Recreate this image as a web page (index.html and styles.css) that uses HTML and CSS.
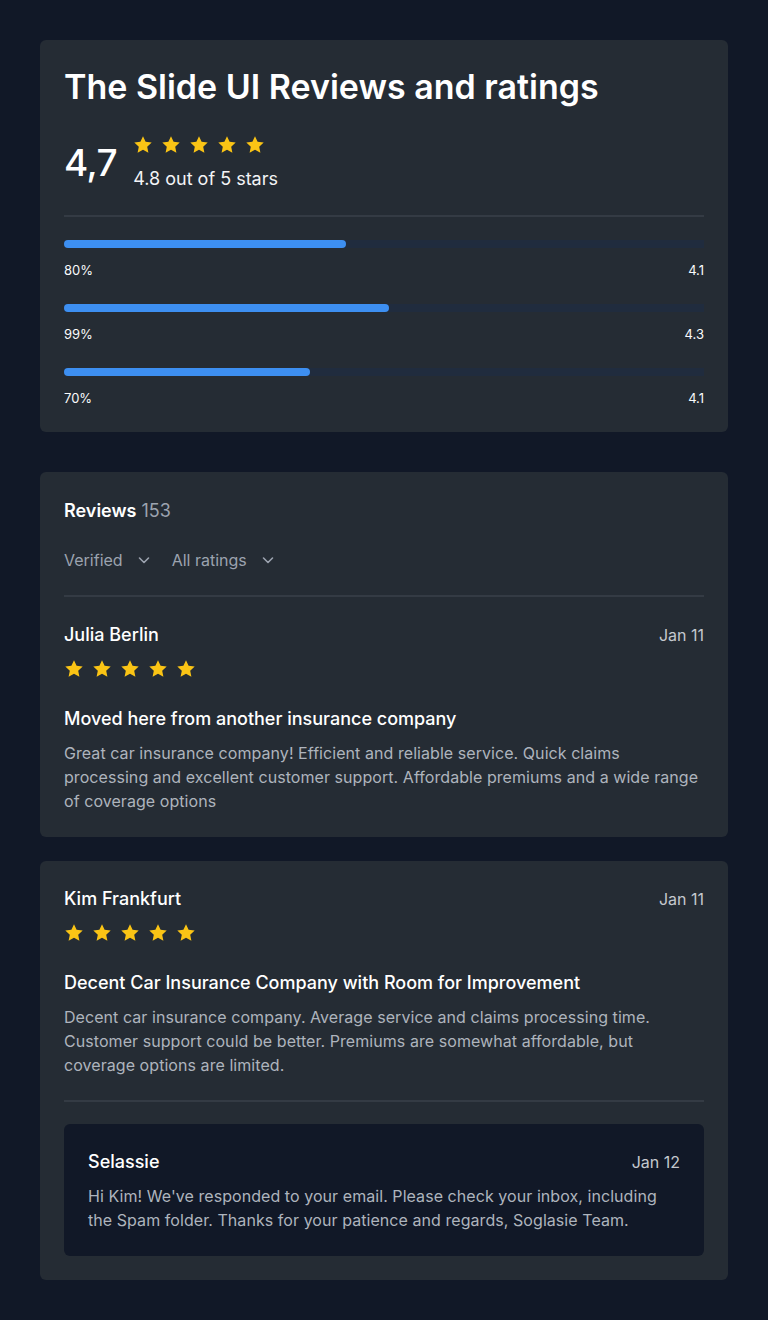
FILE: index.html
```html
<!DOCTYPE html>
<html lang="en">
<head>
<meta charset="utf-8">
<title>The Slide UI Reviews and ratings</title>
<link rel="stylesheet" href="styles.css">
</head>
<body>
<svg width="0" height="0" class="defs" aria-hidden="true">
  <defs>
    <symbol id="star" viewBox="0 0 20 20">
      <path d="M10 1.2l2.6 5.6 6.1.7-4.5 4.2 1.2 6.1L10 14.8l-5.4 3 1.2-6.1L1.3 7.5l6.1-.7z" fill="#fac415"/>
    </symbol>
    <symbol id="chev" viewBox="0 0 16 16">
      <path d="M3.5 6l4.5 4.5L12.5 6" fill="none" stroke="#9ca3af" stroke-width="1.6" stroke-linecap="round" stroke-linejoin="round"/>
    </symbol>
  </defs>
</svg>
<main class="page">
  <section class="card summary">
    <h1 class="title">The Slide UI Reviews and ratings</h1>
    <div class="score">
      <div class="big">4,7</div>
      <div class="score-info">
        <div class="stars">
          <svg class="star"><use href="#star"/></svg><svg class="star"><use href="#star"/></svg><svg class="star"><use href="#star"/></svg><svg class="star"><use href="#star"/></svg><svg class="star"><use href="#star"/></svg>
        </div>
        <div class="out">4.8 out of 5 stars</div>
      </div>
    </div>
    <hr class="divider">
    <div class="bars">
      <div class="bar-row">
        <div class="track"><div class="fill" style="width:44%"></div></div>
        <div class="bar-labels"><span>80%</span><span>4.1</span></div>
      </div>
      <div class="bar-row">
        <div class="track"><div class="fill" style="width:50.8%"></div></div>
        <div class="bar-labels"><span>99%</span><span>4.3</span></div>
      </div>
      <div class="bar-row">
        <div class="track"><div class="fill" style="width:38.4%"></div></div>
        <div class="bar-labels"><span>70%</span><span>4.1</span></div>
      </div>
    </div>
  </section>

  <section class="card reviews">
    <div class="reviews-head"><strong>Reviews</strong> <span class="count">153</span></div>
    <div class="filters">
      <span class="filter">Verified <svg class="chev"><use href="#chev"/></svg></span>
      <span class="filter">All ratings <svg class="chev"><use href="#chev"/></svg></span>
    </div>
    <hr class="divider">
    <article class="review">
      <div class="review-top"><span class="name">Julia Berlin</span><span class="date">Jan 11</span></div>
      <div class="stars rstars">
        <svg class="star"><use href="#star"/></svg><svg class="star"><use href="#star"/></svg><svg class="star"><use href="#star"/></svg><svg class="star"><use href="#star"/></svg><svg class="star"><use href="#star"/></svg>
      </div>
      <h2 class="rtitle">Moved here from another insurance company</h2>
      <p class="rbody">Great car insurance company! Efficient and reliable service. Quick claims processing and excellent customer support. Affordable premiums and a wide range of coverage options</p>
    </article>
  </section>

  <section class="card review-card">
    <article class="review">
      <div class="review-top"><span class="name">Kim Frankfurt</span><span class="date">Jan 11</span></div>
      <div class="stars rstars">
        <svg class="star"><use href="#star"/></svg><svg class="star"><use href="#star"/></svg><svg class="star"><use href="#star"/></svg><svg class="star"><use href="#star"/></svg><svg class="star"><use href="#star"/></svg>
      </div>
      <h2 class="rtitle">Decent Car Insurance Company with Room for Improvement</h2>
      <p class="rbody">Decent car insurance company. Average service and claims processing time. Customer support could be better. Premiums are somewhat affordable, but coverage options are limited.</p>
    </article>
    <hr class="divider reply-div">
    <div class="reply">
      <div class="review-top"><span class="name">Selassie</span><span class="date">Jan 12</span></div>
      <p class="rbody">Hi Kim! We've responded to your email. Please check your inbox, including the Spam folder. Thanks for your patience and regards, Soglasie Team.</p>
    </div>
  </section>
</main>
</body>
</html>
```
FILE: styles.css
```css
* { box-sizing: border-box; }
html, body { margin: 0; padding: 0; }
body {
  background: #111827;
  font-family: Inter, "Noto Sans", "Liberation Sans", sans-serif;
  color: #ffffff;
  min-height: 1320px;
}
.defs { position: absolute; width: 0; height: 0; }
.page {
  padding: 40px;
  display: flex;
  flex-direction: column;
  gap: 24px;
}
.card {
  background: #252c34;
  border-radius: 6px;
  padding: 24px;
}
.summary { margin-bottom: 16px; }
.title {
  margin: 0;
  font-size: 34px;
  font-weight: 600;
  line-height: 46px;
  letter-spacing: 0;
}
.score {
  display: flex;
  align-items: center;
  gap: 16px;
  margin-top: 25px;
}
.big {
  font-size: 37px;
  font-weight: 500;
  line-height: 44px;
  letter-spacing: -0.5px;
}
.score-info { display: flex; flex-direction: column; gap: 12px; }
.stars { display: flex; gap: 8px; height: 20px; align-items: center; }
.star { width: 20px; height: 20px; display: block; }
.out { font-size: 18px; line-height: 24px; color: #f3f4f6; }
.divider {
  border: 0;
  height: 2px;
  background: #343b44;
  margin: 23px 0 0;
}
.summary .divider { margin-top: 24px; }
.bars { display: flex; flex-direction: column; gap: 24px; margin-top: 23px; }
.track {
  height: 8px;
  background: #202c3e;
  position: relative;
}
.fill { height: 100%; background: #3d8ff1; border-radius: 4px; }
.bar-labels {
  display: flex;
  justify-content: space-between;
  font-size: 13px;
  line-height: 20px;
  margin-top: 12px;
  color: #f9fafb;
}
.reviews-head { font-size: 18px; line-height: 28px; padding-top: 1px; }
.reviews-head strong { font-weight: 600; }
.count { color: #9ca3af; }
.filters { display: flex; gap: 20px; margin-top: 23px; }
.filter {
  color: #9ca3af;
  font-size: 16px;
  line-height: 24px;
  display: inline-flex;
  align-items: center;
  gap: 13px;
}
.chev { width: 16px; height: 16px; display: block; }
.reviews .divider { margin-top: 23px; }
.reviews .review { margin-top: 24px; }
.review-top {
  display: flex;
  justify-content: space-between;
  align-items: center;
}
.name { font-size: 18px; font-weight: 500; line-height: 28px; }
.date { font-size: 16px; color: #c4c8ce; line-height: 28px; }
.rstars { margin-top: 11px; }
.reviews .rstars { margin-top: 10px; }
.review-card .rstars { margin-top: 10px; }
.rtitle {
  margin: 28px 0 0;
  font-size: 18px;
  font-weight: 500;
  line-height: 24px;
}
.rbody {
  margin: 10px 0 0;
  font-size: 16px;
  line-height: 24px;
  color: #aeb4bd;
  letter-spacing: 0.06px;
}
.reply-div { margin-top: 23px; }
.reply {
  background: #111827;
  border-radius: 6px;
  padding: 24px;
  margin-top: 22px;
}
.reply .rbody { margin-top: 8px; }
```
